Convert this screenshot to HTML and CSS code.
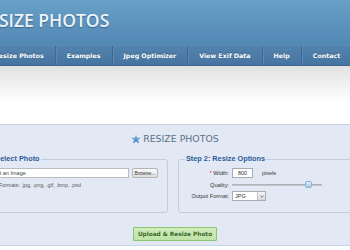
FILE: index.html
```html
<!DOCTYPE html>
<html lang="en">
<head>
    <meta charset="UTF-8">
    <meta name="viewport" content="width=device-width, initial-scale=1.0">
    <title>Resize Photos</title>
    <link rel="stylesheet" href="styles.css">
</head>
<body>
<div class="page">
    <div class="header">
        <div class="logo">RESIZE PHOTOS</div>
    </div>
    <ul class="nav">
        <li><a href="#">Resize Photos</a></li>
        <li><a href="#">Examples</a></li>
        <li><a href="#">Jpeg Optimizer</a></li>
        <li><a href="#">View Exif Data</a></li>
        <li><a href="#">Help</a></li>
        <li><a href="#">Contact</a></li>
    </ul>
    <div class="intro"></div>
    <div class="panel">
        <h2 class="panel-title">
            <svg class="star" width="10" height="10" viewBox="0 0 10 10">
                <defs>
                    <linearGradient id="starfill" x1="0" y1="0" x2="0" y2="1">
                        <stop offset="0" stop-color="#8cc2e8"/>
                        <stop offset="1" stop-color="#3d80b9"/>
                    </linearGradient>
                </defs>
                <polygon points="5,0.4 6.2,3.7 9.8,3.8 7,6 8,9.5 5,7.5 2,9.5 3,6 0.2,3.8 3.8,3.7" fill="url(#starfill)"/>
            </svg>
            <span>RESIZE PHOTOS</span>
        </h2>
        <form class="columns">
            <fieldset class="box">
                <legend>Step 1: Select Photo</legend>
                <div class="file-row">
                    <input type="text" class="file-name" value="Select an Image" readonly>
                    <button type="button" class="browse">Browse...</button>
                </div>
                <p class="hint">Allowed Formats: .jpg, .png, .gif, .bmp, .psd</p>
            </fieldset>
            <fieldset class="box">
                <legend>Step 2: Resize Options</legend>
                <div class="options">
                    <label><span class="req">*</span> Width:</label>
                    <div class="field"><input type="text" class="width-input" value="800"><span class="unit">pixels</span></div>
                    <label>Quality:</label>
                    <div class="field"><div class="slider"><span class="handle" style="left: 81%"></span></div></div>
                    <label>Output Format:</label>
                    <div class="field"><span class="select"><span class="select-value">JPG</span><span class="select-arrow"><svg width="4" height="3" viewBox="0 0 4 3"><path d="M0.5 0.8 L2 2.2 L3.5 0.8" fill="none" stroke="#555" stroke-width="0.8"/></svg></span></span></div>
                </div>
            </fieldset>
        </form>
        <div class="actions">
            <button type="button" class="submit">Upload &amp; Resize Photo</button>
        </div>
    </div>
</div>
</body>
</html>
```

FILE: styles.css
```css
body {
    margin: 0;
    overflow: hidden;
    background-color: #fff;
    font-family: 'Liberation Sans', Arial, sans-serif;
    color: #333;
}
.page {
    width: 560px;
    margin-left: -105px;
}
.header {
    box-sizing: border-box;
    height: 45px;
    padding: 10px 0 0 83px;
    background: linear-gradient(to bottom, #68a0c7, #5288b4);
}
.logo {
    font-family: 'Open Sans', sans-serif;
    font-size: 17.5px;
    font-weight: 600;
    line-height: 20px;
    color: #eef3f8;
    text-shadow: 0 1px 1px rgba(30, 60, 90, 0.5);
}
.nav {
    display: flex;
    box-sizing: border-box;
    height: 21px;
    margin: 0;
    padding: 0 0 0 88px;
    list-style: none;
    background: linear-gradient(to bottom, #5283ae, #4674a0);
    border-top: 1px solid #5b8bb5;
    border-bottom: 1px solid #3d6892;
}
.nav li + li {
    border-left: 1px solid #3d6892;
    box-shadow: inset 1px 0 0 #5a88b2;
}
.nav a {
    display: block;
    padding: 0 11px;
    color: #fff;
    font: bold 6.3px/19px 'DejaVu Sans', sans-serif;
    text-decoration: none;
    text-shadow: 0 -1px 0 rgba(0, 0, 0, 0.3);
}
.intro {
    height: 58px;
    background: linear-gradient(to bottom, #e2e2e2, #fff 36px);
}
.panel {
    padding: 8px 0 4px;
    background-color: #e2e9f5;
    border-top: 1px solid #c6d3e7;
    border-bottom: 1px solid #c6d3e7;
}
.panel-title {
    display: flex;
    justify-content: center;
    align-items: center;
    gap: 2px;
    margin: 0 0 9px;
    font: normal 9.4px/12px 'DejaVu Sans', sans-serif;
    color: #5b7189;
}
.columns {
    display: flex;
    gap: 10px;
    width: 424px;
    margin: 0 auto;
    padding-right: 4px;
}
.box {
    flex: 1;
    min-width: 0;
    margin: 0;
    padding: 3px 6px 10px;
    border: 1px solid #c5ccd8;
    border-radius: 3px;
}
legend {
    padding: 0 1px;
    font: bold 7.3px/10px 'Liberation Sans', Arial, sans-serif;
    color: #2c5b98;
}
.file-row {
    display: flex;
    align-items: center;
    height: 12px;
}
.file-name {
    box-sizing: border-box;
    width: 150px;
    height: 10px;
    margin: 0 0 0 11px;
    padding: 0 6px;
    border: 1px solid #b9bcc0;
    background-color: #fff;
    font: 5.5px 'Liberation Sans', Arial, sans-serif;
    color: #444;
    outline: none;
}
.browse {
    box-sizing: border-box;
    width: 26px;
    height: 10px;
    margin-left: 3px;
    padding: 0;
    border: 1px solid #b4b4b4;
    border-radius: 2px;
    background: linear-gradient(to bottom, #fafafa, #dedede);
    font: 5px 'Liberation Sans', Arial, sans-serif;
    color: #333;
}
.hint {
    margin: 0 0 0 11px;
    font-size: 5.3px;
    line-height: 12px;
    color: #555;
}
.options {
    display: grid;
    grid-template-columns: 44px auto;
    grid-template-rows: 12px 11px 12px;
    column-gap: 3px;
    align-items: center;
}
.options label {
    text-align: right;
    font-size: 5.6px;
    color: #333;
}
.req {
    color: #d9342b;
}
.field {
    display: flex;
    align-items: center;
}
.width-input {
    box-sizing: border-box;
    width: 21px;
    height: 10px;
    margin: 0;
    padding: 0;
    border: 1px solid #a9acb0;
    background-color: #fff;
    text-align: center;
    font: 5.5px 'Liberation Sans', Arial, sans-serif;
    color: #333;
}
.unit {
    margin-left: 9px;
    font-size: 5.5px;
}
.slider {
    position: relative;
    width: 90px;
    height: 2px;
    border-radius: 1px;
    background-color: #c3c7cd;
    box-shadow: inset 0 1px 0 #aeb2b8;
}
.handle {
    position: absolute;
    top: -3px;
    box-sizing: border-box;
    width: 7px;
    height: 7px;
    border: 1px solid #8db2d4;
    border-radius: 2px;
    background: linear-gradient(to bottom, #e0f0fb, #9fcaea);
}
.select {
    display: inline-flex;
    box-sizing: border-box;
    width: 34px;
    height: 10px;
    border: 1px solid #a9acb0;
    background-color: #fff;
}
.select-value {
    flex: 1;
    padding-left: 2px;
    font-size: 5.5px;
    line-height: 8px;
}
.select-arrow {
    display: flex;
    align-items: center;
    justify-content: center;
    width: 7px;
    border-left: 1px solid #c4c6c9;
    background: linear-gradient(to bottom, #f6f6f6, #d8d8d8);
}
.actions {
    margin-top: 9px;
    text-align: center;
}
.submit {
    box-sizing: border-box;
    height: 14px;
    padding: 0 4px;
    border: 1px solid #8dc571;
    border-radius: 1px;
    background: linear-gradient(to bottom, #d0ecbd, #bfe2a7);
    font: bold 5.8px 'DejaVu Sans', sans-serif;
    color: #3a672a;
}
```
